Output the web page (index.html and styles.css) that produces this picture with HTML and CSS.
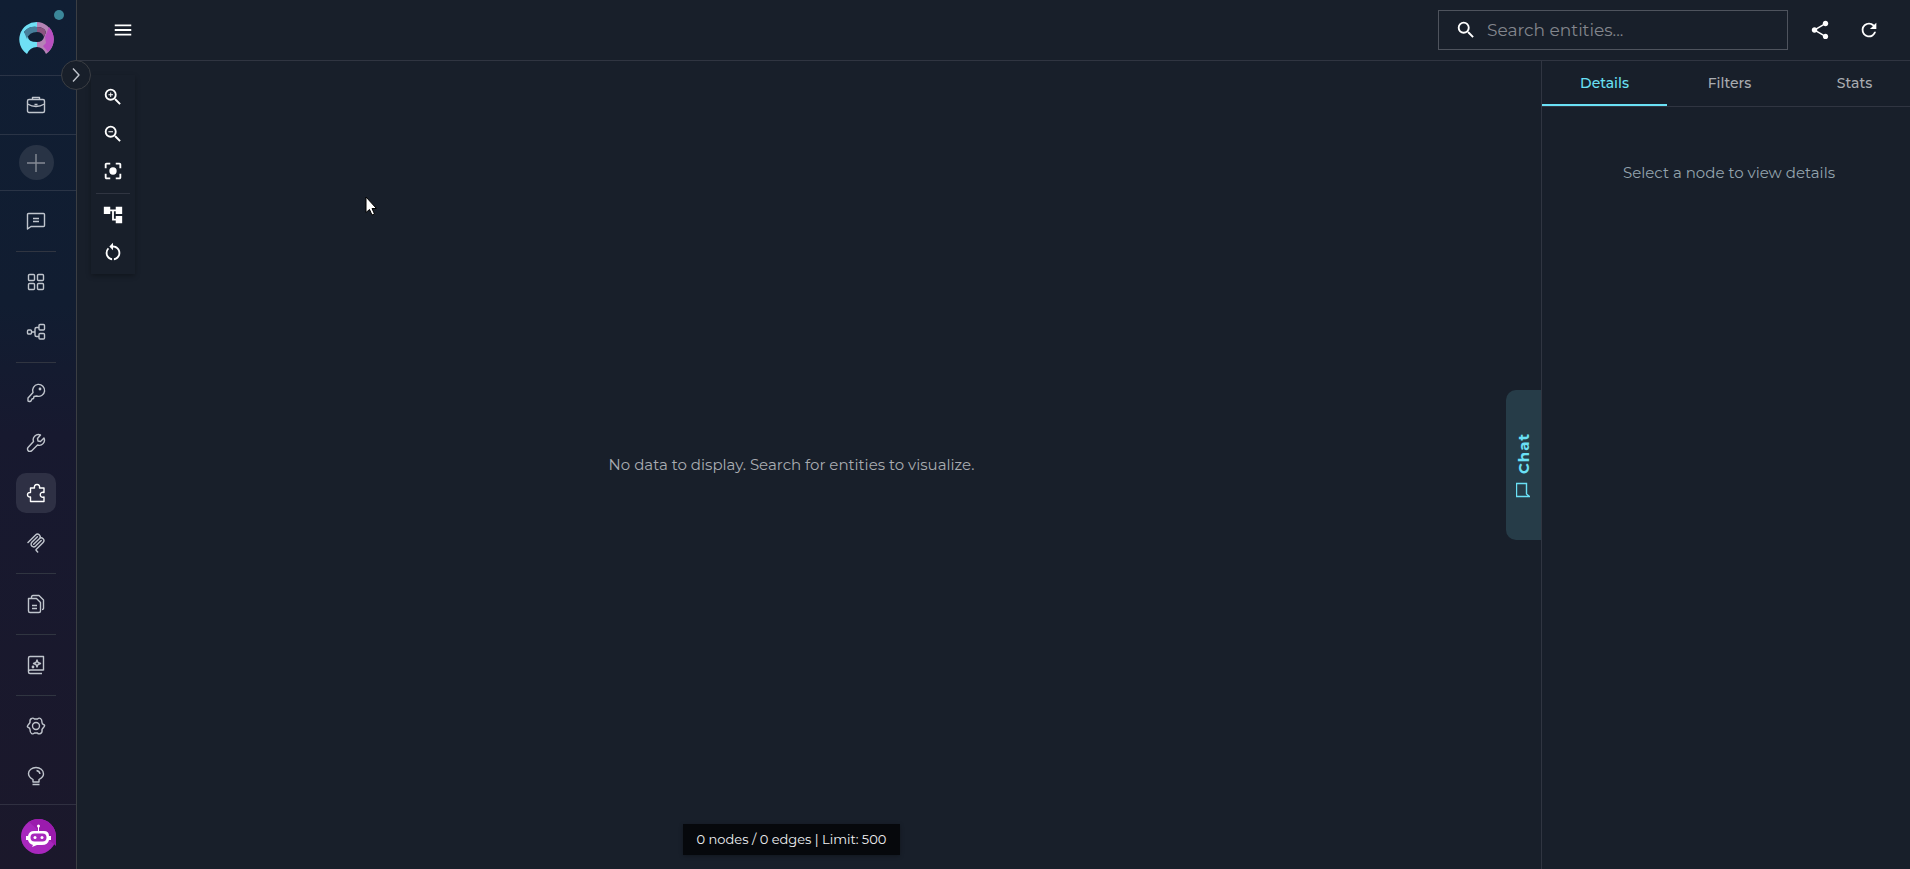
FILE: index.html
```html
<!DOCTYPE html>
<html lang="en">

<head>
    <meta charset="UTF-8">
    <meta name="viewport" content="width=device-width, initial-scale=1.0">
    <title>Graph Explorer</title>
    <link rel="stylesheet" href="styles.css">
</head>

<body>
    <aside class="sidebar">
        <div class="sidebar-logo">
            <a href="#" aria-label="Home">
                <svg width="35" height="32" viewBox="0 0 35 32">
                    <path fill="#6fdff5" d="M18 0A17.500 17.500 0 0 0 8 32Q11 25 18 25V20Q9 20 9 15L5 10Q10 4 18 5z" />
                    <path fill="#b583b5" d="M18 0V5Q25 5 27 10L25 15Q24 20 18 20V25Q24 25 27 32A17.500 17.500 0 0 0 18 0z" />
                    <path fill="#b84fc0" d="M30 5L26 15 27 21 24 24 29 30A17.500 17.500 0 0 0 30 5z" />
                    <path fill="#477f9b" d="M18 5Q9 4 5 10L8 17Q10 10 18 10z" />
                    <path fill="#8b5480" d="M18 5V10Q23 10 25 15L27 10Q25 5 18 5z" />
                </svg>
            </a>
            <span class="status-dot"></span>
        </div>
        <button class="expand-button" aria-label="Expand sidebar">
            <svg class="line-icon" width="18" height="18" viewBox="0 0 18 18"><path d="M6 2.500l6 6.500-6 6.500" /></svg>
        </button>
        <div class="sidebar-project">
            <button class="nav-button" aria-label="Projects">
                <svg class="line-icon" width="20" height="20" viewBox="0 0 20 20"><rect x="1.500" y="4.500" width="17" height="13" rx="1.500" /><path d="M6.500 4V2.500h7V4M1.500 9q8.500 5 17 0M8.500 9.500h3" /></svg>
            </button>
        </div>
        <div class="sidebar-create">
            <button class="create-button" aria-label="Create">
                <svg class="line-icon" width="20" height="20" viewBox="0 0 20 20"><path d="M10 1v18M1 10h18" /></svg>
            </button>
        </div>
        <nav class="sidebar-nav">
            <a class="nav-button" href="#" aria-label="Chat">
                <svg class="line-icon" width="20" height="20" viewBox="0 0 20 20"><path d="M1.500 18V3.500q0-1 1-1h15q1 0 1 1v11q0 1-1 1H5zM7 7.500h6M7 10.500h6" /></svg>
            </a>
            <hr>
            <a class="nav-button" href="#" aria-label="Applications">
                <svg class="line-icon" width="20" height="20" viewBox="0 0 20 20"><rect x="2.500" y="2.500" width="6" height="6" rx="1" /><rect x="11.500" y="2.500" width="6" height="6" rx="1" /><rect x="2.500" y="11.500" width="6" height="6" rx="1" /><rect x="11.500" y="11.500" width="6" height="6" rx="1" /></svg>
            </a>
            <a class="nav-button" href="#" aria-label="Pipelines">
                <svg class="line-icon" width="20" height="20" viewBox="0 0 20 20"><rect x="1.500" y="8" width="4" height="4" rx="1" /><rect x="13" y="2.500" width="5.500" height="5.500" rx="1" /><rect x="13" y="11.500" width="5.500" height="5.500" rx="1" /><path d="M5.500 10H9M13 5.500h-2.500Q9 5.500 9 7v6q0 1.500 1.500 1.500H13" /></svg>
            </a>
            <hr>
            <a class="nav-button" href="#" aria-label="Credentials">
                <svg class="line-icon" width="20" height="20" viewBox="0 0 20 20"><path d="M7 9.500A6 6 0 1 1 10.500 13L8 13.500 7.500 15.500 6 16 5 18Q3 19 2 18V15z" /><circle cx="14" cy="6" r=".7" /></svg>
            </a>
            <a class="nav-button" href="#" aria-label="Toolkits">
                <svg class="line-icon" width="20" height="20" viewBox="0 0 20 20"><path d="M14.500 2A5.200 5.200 0 0 0 7.500 8.500L2 14.500Q1 16 2 17.500t3.500.5L11.500 12A5.200 5.200 0 0 0 18 5L14.500 8.500 12 8 11.500 5.500z" /></svg>
            </a>
            <a class="nav-button active" href="#" aria-label="Extensions">
                <svg class="line-icon" width="20" height="20" viewBox="0 0 20 20"><path d="M4.500 5h4C8 3 9 1.500 11 1.500S14 3 13.500 5H18v4.500c-5-1.500-5 6 0 4.500v4.500H4.500V14C.500 14.500.500 9 4.500 9.500z" /></svg>
            </a>
            <a class="nav-button" href="#" aria-label="MCP">
                <svg class="line-icon mcp-icon" width="20" height="20" viewBox="0 0 180 180"><path d="M18 85L86 17C95 8 110 8 120 17C129 26 129 42 120 51L69 102M69 102L120 51C129 42 144 42 154 51C163 61 163 76 154 85L93 147C90 150 90 155 93 158L105 171M103 34L53 84C43 94 43 109 53 118C62 127 77 127 87 118L137 68" /></svg>
            </a>
            <hr>
            <a class="nav-button" href="#" aria-label="Artifacts">
                <svg class="line-icon" width="20" height="20" viewBox="0 0 20 20"><path d="M2.500 4.500h8L14.500 8.500V17q0 1.500-1.500 1.500H4Q2.500 18.500 2.500 17zM5.500 4.500V3Q5.500 1.500 7 1.500h6L17.500 6v8.500q0 1-1.500 1M6 11.500h5M6 14.500h5" /></svg>
            </a>
            <hr>
            <a class="nav-button" href="#" aria-label="Library">
                <svg class="line-icon" width="20" height="20" viewBox="0 0 20 20"><path d="M17.500 15.500V1.500H4Q2.500 1.500 2.500 3v14q0 1.500 1.500 1.500h12M2.500 16Q3 15 4.500 15h13M11 5l1 2.500 2.500 1L12 9.500 11 12 10 9.500 7.500 8.500 10 7.500z" /><circle cx="7" cy="12" r=".7" /></svg>
            </a>
            <hr>
            <a class="nav-button" href="#" aria-label="Settings">
                <svg class="line-icon" width="20" height="20" viewBox="0 0 20 20"><path d="M5.500 2.500Q7 1.500 8.500 3h3Q13 1.500 14.500 2.500T16 6.500Q16 8 17.500 8.500T18.500 10 17.500 11.500 16 13.500Q16.500 16.500 14.500 17.500T11.500 17h-3Q7 18.500 5.500 17.500T4 13.500Q4 12 2.500 11.500T1.500 10 2.500 8.500 4 6.500Q3.500 3.500 5.500 2.500z" /><circle cx="10" cy="10" r="3.500" /></svg>
            </a>
            <a class="nav-button" href="#" aria-label="Help">
                <svg class="line-icon" width="20" height="20" viewBox="0 0 20 20"><path d="M7 16v-2.500Q2.500 11 2.500 7.500C2.500 4 6 1.500 10 1.500S17.500 4 17.500 8Q17.500 11 13 13.500V16zM10.500 4.500Q13.500 5 14 8M6.500 18.500h7" /></svg>
            </a>
        </nav>
        <div class="sidebar-user">
            <button class="avatar" aria-label="Account">
                <svg width="35" height="35" viewBox="0 0 35 35">
                    <circle cx="17.500" cy="17.500" r="17.500" fill="#a827bd" />
                    <path fill="#9b1bad" d="M8 3L35 27V17A17.500 17.500 0 0 0 8 3z" />
                    <path fill="#fff" d="M17 8h1v4h5q5 0 5 5h2v4h-2q-1 5-7 5h-5l-5 2 1-2q-4-1-5-5H5v-4h2q1-5 6-5h4z" />
                    <circle cx="17.500" cy="7" r="1.500" fill="#fff" />
                    <rect x="9.500" y="14.500" width="16" height="8" rx="4" fill="#a827bd" />
                    <circle cx="14" cy="18.500" r="1.500" fill="#fff" />
                    <circle cx="21" cy="18.500" r="1.500" fill="#fff" />
                </svg>
            </button>
        </div>
    </aside>

    <div class="page">
        <header class="topbar">
            <button class="icon-button" aria-label="Menu">
                <svg width="22" height="22" viewBox="0 0 24 24"><path d="M3 18h18v-2H3v2zm0-5h18v-2H3v2zm0-7v2h18V6H3z" /></svg>
            </button>
            <div class="topbar-actions">
                <label class="search">
                    <svg width="22" height="22" viewBox="0 0 24 24"><path d="M15.500 14h-.79l-.28-.27A6.471 6.471 0 0 0 16 9.500 6.500 6.500 0 1 0 9.500 16c1.610 0 3.090-.59 4.230-1.570l.27.28v.79l5 4.990L20.490 19l-4.990-5zm-6 0C7.010 14 5 11.990 5 9.500S7.010 5 9.500 5 14 7.010 14 9.500 11.990 14 9.500 14z" /></svg>
                    <input type="text" placeholder="Search entities..." aria-label="Search entities">
                </label>
                <button class="icon-button" aria-label="Share">
                    <svg width="22" height="22" viewBox="0 0 24 24"><path d="M18 16.080c-.76 0-1.440.3-1.960.77L8.910 12.700c.05-.23.09-.46.09-.7s-.04-.47-.09-.7l7.050-4.110c.54.5 1.250.81 2.040.81 1.660 0 3-1.340 3-3s-1.340-3-3-3-3 1.340-3 3c0 .24.04.47.09.7L8.040 9.810C7.500 9.310 6.790 9 6 9c-1.660 0-3 1.340-3 3s1.340 3 3 3c.79 0 1.500-.31 2.040-.81l7.120 4.160c-.05.21-.08.43-.08.65 0 1.610 1.310 2.920 2.920 2.920s2.920-1.310 2.920-2.920-1.310-2.920-2.920-2.920z" /></svg>
                </button>
                <button class="icon-button" aria-label="Refresh">
                    <svg width="22" height="22" viewBox="0 0 24 24"><path d="M17.650 6.350A7.958 7.958 0 0 0 12 4a8 8 0 1 0 7.730 10h-2.080A5.990 5.990 0 0 1 12 18c-3.310 0-6-2.690-6-6s2.690-6 6-6c1.660 0 3.140.69 4.220 1.780L13 11h7V4l-2.350 2.350z" /></svg>
                </button>
            </div>
        </header>

        <div class="workspace">
            <main class="canvas">
                <div class="graph-tools">
                    <button class="tool-button" aria-label="Zoom in">
                        <svg width="22" height="22" viewBox="0 0 24 24"><path d="M15.500 14h-.79l-.28-.27A6.471 6.471 0 0 0 16 9.500 6.500 6.500 0 1 0 9.500 16c1.610 0 3.090-.59 4.230-1.570l.27.28v.79l5 4.990L20.490 19l-4.990-5zm-6 0C7.010 14 5 11.990 5 9.500S7.010 5 9.500 5 14 7.010 14 9.500 11.990 14 9.500 14zM12 10h-2v2H9v-2H7V9h2V7h1v2h2z" /></svg>
                    </button>
                    <button class="tool-button" aria-label="Zoom out">
                        <svg width="22" height="22" viewBox="0 0 24 24"><path d="M15.500 14h-.79l-.28-.27A6.471 6.471 0 0 0 16 9.500 6.500 6.500 0 1 0 9.500 16c1.610 0 3.090-.59 4.230-1.570l.27.28v.79l5 4.990L20.490 19l-4.990-5zm-6 0C7.010 14 5 11.990 5 9.500S7.010 5 9.500 5 14 7.010 14 9.500 11.990 14 9.500 14zM7 9h5v1H7z" /></svg>
                    </button>
                    <button class="tool-button" aria-label="Fit to view">
                        <svg width="22" height="22" viewBox="0 0 24 24"><path d="M5 15H3v4c0 1.100.9 2 2 2h4v-2H5v-4zM5 5h4V3H5c-1.100 0-2 .9-2 2v4h2V5zm14-2h-4v2h4v4h2V5c0-1.100-.9-2-2-2zm0 16h-4v2h4c1.100 0 2-.9 2-2v-4h-2v4zM12 8a4 4 0 1 0 0 8 4 4 0 0 0 0-8z" /></svg>
                    </button>
                    <hr>
                    <button class="tool-button" aria-label="Layout">
                        <svg width="22" height="22" viewBox="0 0 24 24"><path d="M22 11V3h-7v3H9V3H2v8h7V8h2v10h4v3h7v-8h-7v3h-2V8h2v3z" /></svg>
                    </button>
                    <button class="tool-button" aria-label="Reset">
                        <svg width="22" height="22" viewBox="0 0 24 24"><path d="M12 5V2L8 6l4 4V7c3.310 0 6 2.690 6 6 0 2.970-2.170 5.430-5 5.910v2.020c3.950-.49 7-3.850 7-7.930 0-4.420-3.580-8-8-8zM6 13c0-1.650.67-3.150 1.760-4.240L6.340 7.340A8.014 8.014 0 0 0 4 13c0 4.080 3.050 7.440 7 7.930v-2.020c-2.830-.48-5-2.940-5-5.910z" /></svg>
                    </button>
                </div>
                <p class="empty-message">No data to display. Search for entities to visualize.</p>
                <div class="graph-stats">0 nodes / 0 edges | Limit: 500</div>
                <svg class="pointer" width="14" height="20" viewBox="0 0 14 20"><path fill="#fff" stroke="#000" d="M1 1v15.500l3.500-3 2.500 5.500 2.500-1-2.500-5.500h4.500z" /></svg>
            </main>

            <button class="chat-handle">
                <svg width="14" height="16" viewBox="0 0 14 16"><path d="M.5 1.500h13v13H3.500V4z" /></svg>
                <span>Chat</span>
            </button>

            <aside class="details-panel">
                <div class="tabs" role="tablist">
                    <button class="tab selected" role="tab" aria-selected="true">Details</button>
                    <button class="tab" role="tab" aria-selected="false">Filters</button>
                    <button class="tab" role="tab" aria-selected="false">Stats</button>
                </div>
                <p class="details-message">Select a node to view details</p>
            </aside>
        </div>
    </div>
</body>

</html>
```
FILE: styles.css
```css
* {
    box-sizing: border-box;
}

body {
    display: flex;
    min-height: 100vh;
    margin: 0;
    font-family: Montserrat, Inter, sans-serif;
    font-size: 15px;
    color: #fff;
    background-color: #181f2a;
}

button {
    padding: 0;
    border: none;
    font-family: inherit;
    color: inherit;
    background: none;
    cursor: pointer;
}

p {
    margin: 0;
}

hr {
    width: 100%;
    height: 1px;
    margin: 0;
    border: none;
    background-color: #303541;
}

svg {
    display: block;
    fill: currentColor;
}

.line-icon {
    fill: none;
    stroke: currentColor;
    stroke-width: 1.4;
    stroke-linejoin: round;
}

.mcp-icon {
    stroke-width: 13;
    stroke-linecap: round;
}

/* Sidebar */
.sidebar {
    position: relative;
    display: flex;
    flex-direction: column;
    flex-shrink: 0;
    width: 77px;
    border-right: 1px solid #3b3e43;
    color: #c0c5cd;
    background: linear-gradient(#101e33 0%, #111d31 35%, #17192f 50%, #1b182b 100%);
}

.sidebar-logo,
.sidebar-project,
.sidebar-create {
    display: flex;
    align-items: center;
    justify-content: center;
    padding-right: 4px;
    border-bottom: 1px solid #2a3446;
}

.sidebar-logo {
    height: 76px;
}

.sidebar-project {
    height: 59px;
}

.sidebar-create {
    height: 56px;
}

.status-dot {
    position: absolute;
    top: 10px;
    left: 54px;
    width: 10px;
    height: 10px;
    border-radius: 50%;
    background-color: #3b8799;
}

.expand-button {
    position: absolute;
    top: 60px;
    right: -15px;
    z-index: 1;
    display: grid;
    place-items: center;
    width: 30px;
    height: 30px;
    border: 1px solid #3b3e43;
    border-radius: 50%;
    background-color: #181f2a;
}

.create-button {
    display: grid;
    place-items: center;
    width: 35px;
    height: 35px;
    border-radius: 50%;
    color: #858b95;
    background-color: #283345;
}

.sidebar-nav {
    display: flex;
    flex: 1;
    flex-direction: column;
    gap: 10px;
    padding: 10px 20px 8px 16px;
}

.nav-button {
    display: grid;
    place-items: center;
    width: 40px;
    height: 40px;
    border-radius: 10px;
    color: inherit;
}

.nav-button.active {
    color: #fff;
    background-color: #2e3044;
}

.sidebar-user {
    display: flex;
    justify-content: center;
    height: 65px;
    padding-top: 14px;
    border-top: 1px solid #303041;
}

.avatar {
    width: 35px;
    height: 35px;
    border-radius: 50%;
}

/* Top bar */
.page {
    display: flex;
    flex: 1;
    flex-direction: column;
    min-width: 0;
}

.topbar {
    display: flex;
    align-items: center;
    justify-content: space-between;
    height: 61px;
    padding: 0 24px 0 29px;
    border-bottom: 1px solid #303541;
}

.topbar-actions {
    display: flex;
    align-items: center;
    gap: 15px;
}

.icon-button,
.tool-button {
    display: grid;
    place-items: center;
    width: 34px;
    height: 34px;
}

.search {
    display: flex;
    align-items: center;
    gap: 10px;
    width: 350px;
    height: 40px;
    padding: 0 16px;
    border: 1px solid #4e535d;
}

.search input {
    flex: 1;
    min-width: 0;
    padding: 0;
    border: none;
    outline: none;
    font-family: inherit;
    font-size: 17px;
    color: #fff;
    background: none;
}

.search input::placeholder {
    color: #83868d;
}

/* Graph */
.workspace {
    display: flex;
    flex: 1;
}

.canvas {
    position: relative;
    display: grid;
    flex: 1;
    place-items: center;
}

.graph-tools {
    position: absolute;
    top: 14px;
    left: 14px;
    display: flex;
    flex-direction: column;
    gap: 3px;
    padding: 5px;
    box-shadow: 0 2px 5px rgba(0, 0, 0, 0.3);
}

.graph-tools hr {
    margin: 2px 0 1px;
}

.empty-message {
    padding-bottom: 2px;
    color: #a9acb1;
}

.graph-stats {
    position: absolute;
    bottom: 14px;
    padding: 6px 14px;
    font-size: 13px;
    line-height: 19px;
    color: #f0f1f3;
    background-color: #06080c;
    box-shadow: 0 1px 4px rgba(0, 0, 0, 0.3);
}

.pointer {
    position: absolute;
    top: 135px;
    left: 288px;
}

.chat-handle {
    display: flex;
    align-items: center;
    align-self: center;
    justify-content: center;
    gap: 8px;
    width: 35px;
    height: 150px;
    border-radius: 0 10px 10px 0;
    font-size: 15px;
    font-weight: 700;
    letter-spacing: 1px;
    color: #6ae0f5;
    background-color: #263c48;
    writing-mode: vertical-rl;
    transform: rotate(180deg);
}

.chat-handle svg {
    fill: none;
    stroke: currentColor;
    stroke-width: 1.4;
}

/* Details */
.details-panel {
    width: 369px;
    border-left: 1px solid #303541;
    overflow: hidden;
}

.tabs {
    display: flex;
    border-bottom: 1px solid #303541;
}

.tab {
    flex: 0 0 125px;
    height: 45px;
    border-bottom: 2px solid transparent;
    font-size: 14px;
    font-weight: 500;
    color: #a9acb1;
}

.tab.selected {
    border-color: #6ae0f5;
    color: #6ae0f5;
}

.details-message {
    padding: 56px 0 0 6px;
    text-align: center;
    color: #94a4ae;
}
```
